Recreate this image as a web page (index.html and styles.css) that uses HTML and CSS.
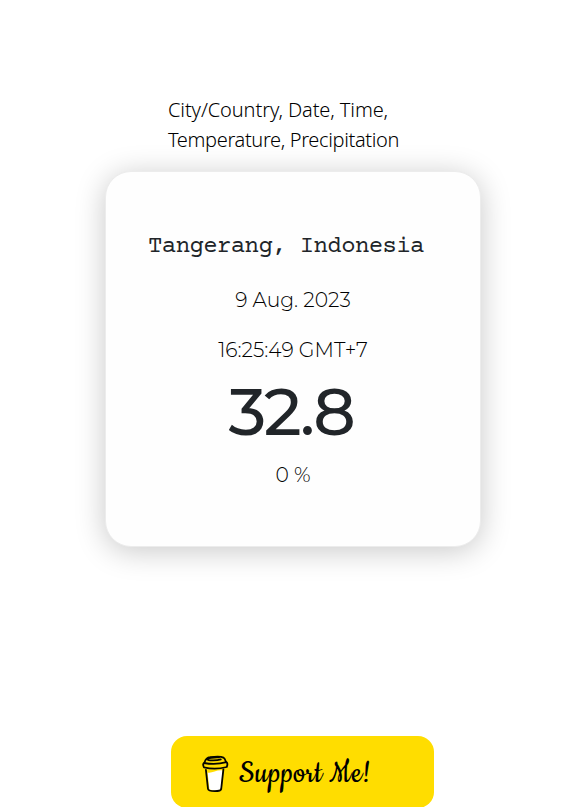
FILE: index.html
```html
<!DOCTYPE html>
<html lang="en">
<head>
<meta charset="utf-8">
<title>Weather</title>
<link rel="stylesheet" href="styles.css">
</head>
<body>
<main class="page">
  <p class="caption">City/Country, Date, Time,<br><span class="caption-second">Temperature, Precipitation</span></p>
  <section class="card">
    <h1 class="city">Tangerang, Indonesia</h1>
    <p class="line date">9 Aug. 2023</p>
    <p class="line time">16:25:49 GMT+7</p>
    <p class="temperature">32.8</p>
    <p class="line rain">0 %</p>
  </section>
  <a class="support">
    <svg class="cup" viewBox="0 0 28 38" fill="none" stroke="#050500" stroke-width="1.8" stroke-linecap="round" stroke-linejoin="round">
      <path d="M5.6 17.5 C10 18.5 14 14.8 20.6 15.4 L18.8 34.5 Q14 36.5 7.4 34.5Z" fill="#fff" stroke="none"/>
      <path d="M3.9 14.8 L6 34 Q6.3 36.2 12.8 36.2 Q18.8 36.2 19.2 34 L21.4 14.3"/>
      <path d="M2 8 Q13.5 10.2 24.5 7.2 Q26.2 8.8 24.7 12 Q13.5 15 2 12.4 Q.3 9 2 8Z"/>
      <path d="M2.4 7.7 C3.3 5 4.8 2.5 8 2.2 C13 1.5 19 1.2 21.4 2.6 C22.8 3.5 23.5 5.5 24 7"/>
      <path d="M17 2.4 C12 2 5 3.5 5.4 4.5 C6.5 6 15 5.5 18.8 4.4"/>
    </svg>
    <span class="support-text">Support Me!</span>
  </a>
</main>
</body>
</html>
```
FILE: styles.css
```css
* { box-sizing: border-box; }
body { margin: 0; background: #fff; color: #212529; overflow: hidden; }
p, h1 { margin: 0; font-weight: 400; white-space: nowrap; }
.page { height: 807px; padding-top: 95px; overflow: hidden; }
.caption {
  height: 76px;
  padding-left: 168px;
  color: #000;
  font: 300 20px/30px "Segoe UI", "Noto Sans", sans-serif;
  letter-spacing: -0.1px;
}
.caption-second { letter-spacing: -0.35px; }
.card {
  width: 376px;
  height: 376px;
  margin-left: 105px;
  padding-top: 59px;
  border: 1px solid #ececec;
  border-radius: 26px;
  background: #fefefe;
  box-shadow: 0 4px 30px rgba(0, 0, 0, 0.22);
  text-align: center;
}
.city {
  margin-left: -14px;
  padding-top: 1px;
  height: 28px;
  font: 400 24px/30px "Courier Prime", "Liberation Mono", monospace;
  letter-spacing: -0.6px;
}
.line {
  height: 30px;
  font: 300 20.3px/30px Montserrat, Inter, sans-serif;
  color: #000;
}
.date { margin-top: 26px; }
.time { margin-top: 20px; }
.temperature {
  height: 76px;
  margin-top: 9px;
  margin-left: -4px;
  font: 500 66px/76px Montserrat, Inter, sans-serif;
  letter-spacing: -2.3px;
}
.rain { margin-top: 10px; }
.support {
  display: flex;
  width: 263px;
  height: 72px;
  margin: 189px 0 0 171px;
  padding: 19px 0 0 31px;
  border-radius: 16px;
  background: #fd0;
}
.cup { width: 28px; height: 38px; flex: none; }
.support-text {
  margin-left: 9px;
  color: #000;
  font: 400 34px/38px Cookie, "Liberation Serif", cursive;
  letter-spacing: 0.3px;
  white-space: nowrap;
}
```
